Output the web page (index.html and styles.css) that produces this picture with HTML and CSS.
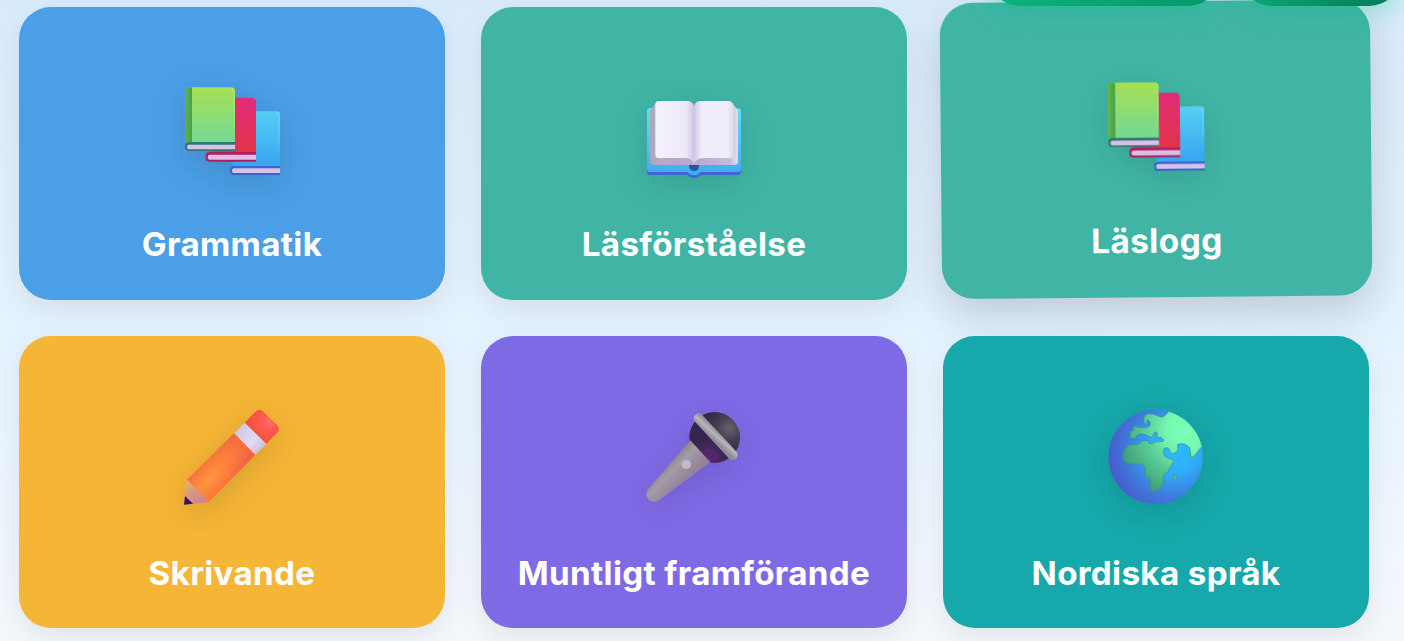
FILE: index.html
```html
<!DOCTYPE html>
<html lang="sv">
<head>
<meta charset="utf-8">
<title>Svenska</title>
<link rel="stylesheet" href="styles.css">
</head>
<body>
<svg class="defs" width="0" height="0" aria-hidden="true">
  <defs>
    <linearGradient id="green" x2="0" y2="1"><stop stop-color="#a7e052"/><stop offset="1" stop-color="#72d995"/></linearGradient>
    <linearGradient id="spine"><stop stop-color="#62b53d"/><stop offset="1" stop-color="#469e55"/></linearGradient>
    <linearGradient id="red" x2="0" y2="1"><stop stop-color="#e02c78"/><stop offset="1" stop-color="#e23349"/></linearGradient>
    <linearGradient id="blue" x2="0" y2="1"><stop stop-color="#54cff3"/><stop offset="1" stop-color="#39a3f0"/></linearGradient>
    <linearGradient id="cover" x2="0" y2="1"><stop stop-color="#60defd"/><stop offset="1" stop-color="#42a9f2"/></linearGradient>
    <linearGradient id="pageL"><stop stop-color="#f4f1fb"/><stop offset=".8" stop-color="#ece8f8"/><stop offset="1" stop-color="#cdc2e2"/></linearGradient>
    <linearGradient id="pageR"><stop stop-color="#cfc5e4"/><stop offset=".2" stop-color="#f0edfa"/><stop offset=".85" stop-color="#f0edfa"/><stop offset="1" stop-color="#e2dcef"/></linearGradient>
    <linearGradient id="block"><stop stop-color="#aaa8b8"/><stop offset=".1" stop-color="#b4aac9"/><stop offset=".5" stop-color="#b4a8d0"/><stop offset=".9" stop-color="#c3badd"/><stop offset="1" stop-color="#dcdae8"/></linearGradient>
    <linearGradient id="fore"><stop stop-color="#cfcbdd"/><stop offset="1" stop-color="#dedee8"/></linearGradient>
    <radialGradient id="wood" gradientUnits="userSpaceOnUse" cx="0" cy="0" r="1" gradientTransform="translate(132 254) rotate(-50) scale(190 66)"><stop stop-color="#ff9640"/><stop offset=".55" stop-color="#fb7b3b"/><stop offset="1" stop-color="#ee6445"/></radialGradient>
    <linearGradient id="tip" x1="70" y1="265" x2="115" y2="320" gradientUnits="userSpaceOnUse"><stop stop-color="#dfa978"/><stop offset="1" stop-color="#cf8093"/></linearGradient>
    <linearGradient id="band" x1="220" y1="100" x2="290" y2="165" gradientUnits="userSpaceOnUse"><stop stop-color="#cbc9dc"/><stop offset=".6" stop-color="#e3daf8"/><stop offset="1" stop-color="#cbbbdc"/></linearGradient>
    <radialGradient id="eraser" cx=".72" cy=".35" r=".6"><stop stop-color="#ff6e62"/><stop offset=".4" stop-color="#ff5a50"/><stop offset="1" stop-color="#f4503f"/></radialGradient>
    <radialGradient id="head" gradientUnits="userSpaceOnUse" cx="298" cy="100" r="100"><stop stop-color="#66606e"/><stop offset=".4" stop-color="#443d4e"/><stop offset=".75" stop-color="#33264b"/><stop offset="1" stop-color="#38254f"/></radialGradient>
    <radialGradient id="glow" gradientUnits="userSpaceOnUse" cx="236" cy="188" r="62"><stop stop-color="#572674"/><stop offset=".4" stop-color="#4e266a"/><stop offset="1" stop-color="#3a2652" stop-opacity="0"/></radialGradient>
    <linearGradient id="handle" x1="105" y1="200" x2="160" y2="255" gradientUnits="userSpaceOnUse"><stop stop-color="#817d83"/><stop offset=".45" stop-color="#a49da6"/><stop offset="1" stop-color="#93849b"/></linearGradient>
    <linearGradient id="ring" x1="268" y1="110" x2="248" y2="132" gradientUnits="userSpaceOnUse"><stop stop-color="#8f8b92"/><stop offset=".5" stop-color="#b9b5ba"/><stop offset="1" stop-color="#928c98"/></linearGradient>
    <radialGradient id="sea" gradientUnits="userSpaceOnUse" cx="255" cy="165" r="205"><stop stop-color="#2bbcff"/><stop offset=".35" stop-color="#30acf9"/><stop offset=".7" stop-color="#3f79dc"/><stop offset="1" stop-color="#4959cb"/></radialGradient>
    <radialGradient id="land" gradientUnits="userSpaceOnUse" cx="290" cy="105" r="200"><stop stop-color="#7affb4"/><stop offset=".3" stop-color="#76f8b0"/><stop offset=".65" stop-color="#57ca96"/><stop offset="1" stop-color="#43a079"/></radialGradient>
    <clipPath id="disc"><circle cx="197" cy="186" r="141.500"/></clipPath>
    <symbol id="books" viewBox="-9 -12 390 390">
      <path fill="url(#blue)" d="M188 124H321Q330 124 330 134V292H188Z"/>
      <path fill="#87ddf8" opacity=".4" d="M318 128Q329 124 329 136V200L325 240V140Z"/>
      <path fill="#3a66cc" d="M192 288H330V315H189Q180 315 180 304V299Q180 288 192 288Z"/>
      <path fill="#d5c3eb" d="M190 295H330V309H190Q186 307 186 302T190 295Z"/>
      <path fill="url(#red)" d="M118 83H247Q258 84 258 96V250H118Z"/>
      <path fill="#ae1f5c" d="M118 246H258V275H116Q107 274 107 264V257Q107 246 118 246Z"/>
      <path fill="#dcbde7" d="M118 254H258V269H118Q113 267 113 261T118 254Z"/>
      <path fill="url(#green)" d="M54 52H184Q195 53 195 64V220H45V63Q45 52 54 52Z"/>
      <path fill="url(#spine)" d="M54 52H66V218H45V63Q45 52 54 52Z"/>
      <path fill="#c3ee72" opacity=".55" d="M184 53Q194 54 194 66V150L191 200V66Z"/>
      <path fill="#32776c" d="M56 216H195V243H54Q45 242 45 232V226Q45 216 56 216Z"/>
      <path fill="#d7c1ec" d="M55 224H195V238H55Q51 236 51 231T55 224Z"/>
    </symbol>
  </defs>
</svg>

<div class="toolbar"><span class="pill pill-wide"></span><span class="pill pill-small"></span></div>

<main class="grid">
  <a class="card blue">
    <svg class="icon"><use href="#books"/></svg>
    <span class="label">Grammatik</span>
  </a>
  <a class="card green">
    <svg class="icon" viewBox="-3 -42 390 390">
      <path fill="#3f67cd" d="M51 100H333V276Q333 285 323 285H211Q205 294 192 294T173 285H61Q51 285 51 275Z"/>
      <path fill="url(#cover)" d="M61 84H323Q333 84 333 94V266Q333 276 323 276H211Q205 286 192 286T173 276H61Q51 276 51 266V94Q51 84 61 84Z"/>
      <path fill="#2456a8" d="M177 252H207V261Q204 273 192 273T177 261Z"/>
      <path fill="url(#block)" d="M80 65L62 90Q60 94 60 100V244Q60 255 71 255H313Q324 255 324 244V98Q324 91 320 87L303 65L192 78Z"/>
      <path fill="url(#fore)" d="M302 64L320 87Q324 92 324 98V242Q324 250 318 252L302 234Z"/>
      <path fill="url(#pageL)" d="M87 63H175Q188 64 192 78V252Q184 234 168 234H87Q76 234 76 224V74Q76 63 87 63Z"/>
      <path fill="url(#pageR)" d="M209 63H298Q304 63 309 71V224Q309 234 298 234H218Q200 234 192 252V78Q196 64 209 63Z"/>
    </svg>
    <span class="label">Läsförståelse</span>
  </a>
  <a class="card green raised">
    <svg class="icon"><use href="#books"/></svg>
    <span class="label">Läslogg</span>
  </a>
  <a class="card yellow">
    <svg class="icon" viewBox="6 0 390 390">
      <path fill="url(#eraser)" d="M239 83L271 50Q281 41 292 47L336 90Q346 100 339 110L304 147Z"/>
      <path fill="url(#band)" d="M239 83L304 147L271 180L207 115Z"/>
      <path fill="url(#wood)" d="M207 115L271 180L131 321L66 254Z"/>
      <path fill="url(#tip)" d="M66 254L131 321L57 329L59 300Z"/>
      <path fill="#3d1455" d="M60 303L84 326L57 329Z"/>
    </svg>
    <span class="label">Skrivande</span>
  </a>
  <a class="card purple">
    <svg class="icon" viewBox="-3 0 390 390">
      <circle cx="254" cy="127" r="76" fill="url(#head)"/>
      <circle cx="254" cy="127" r="76" fill="url(#glow)"/>
      <path fill="url(#handle)" d="M181 136L241 201L87 316Q70 326 57 314Q43 300 54 283Z"/>
      <path stroke="url(#ring)" stroke-width="30" stroke-linecap="round" d="M206 70L308 180"/>
      <circle cx="169" cy="208" r="14" fill="#c1bac7"/>
    </svg>
    <span class="label">Muntligt framförande</span>
  </a>
  <a class="card teal">
    <svg class="icon" viewBox="3 0 390 390">
      <circle cx="197" cy="186" r="141.500" fill="url(#sea)"/>
      <g clip-path="url(#disc)" fill="url(#land)" stroke="#37977a" stroke-width="2" stroke-linejoin="round">
        <path d="M162 84V70Q163 57 178 56Q190 56 202 62Q217 69 223 63L238 48L350 30V158H332L314 182Q307 190 302 184Q301 177 301 168Q300 155 289 150Q277 143 263 148Q260 155 264 161Q263 171 252 175Q244 178 240 171Q239 161 232 158L222 160Q219 171 222 180Q229 190 243 192Q252 194 249 203L232 232Q221 236 221 241V264L207 282Q199 290 188 287L180 282V250Q168 249 165 240V217Q160 208 151 207H117Q104 203 100 191Q97 178 103 166Q109 151 125 149L147 148Q151 139 160 138H174Q175 147 184 147Q197 138 208 140L220 139V133L213 127L205 128L201 121L202 114L196 110L190 116L189 125Q183 129 176 124Q166 117 154 117Q139 116 138 129Q129 133 121 129V112L130 104V97L135 93L148 98L173 97Q181 94 181 86Q179 75 171 75L171 83Q166 88 162 84Z"/>
        <path d="M250 240L258 238V253L251 257Z"/>
      </g>
    </svg>
    <span class="label">Nordiska språk</span>
  </a>
</main>
</body>
</html>
```
FILE: styles.css
```css
* {
  box-sizing: border-box;
}

body {
  margin: 0;
  height: 641px;
  overflow: hidden;
  position: relative;
  background: linear-gradient(180deg, #d9ebfb 0%, #e5f3fe 54%, #f4f8fc 100%);
  font-family: Inter, "Liberation Sans", sans-serif;
}

.defs {
  position: absolute;
}

.grid {
  display: grid;
  grid-template-columns: repeat(3, 426px);
  grid-auto-rows: 292.600px;
  gap: 36px;
  padding: 7px 0 0 19px;
}

.card {
  position: relative;
  display: flex;
  flex-direction: column;
  align-items: center;
  padding-top: 59.200px;
  border-radius: 32px;
  box-shadow: 0 10px 30px rgba(0, 0, 0, 0.08);
  color: #fff;
}

.raised {
  transform: translateY(-4.300px) rotate(-0.5deg) scale(1.01);
  box-shadow: 0 16px 40px rgba(15, 23, 42, 0.18);
}

.blue { background: #4a9fe7; }
.green { background: #40b5a6; }
.yellow { background: #f5b536; }
.purple { background: #7f6ae6; }
.teal { background: #16a8aa; }

.icon {
  display: block;
  width: 130px;
  height: 130px;
  overflow: visible;
  fill: none;
  filter: drop-shadow(0 8px 16px rgba(0, 0, 0, 0.12));
}

.label {
  margin-top: 27px;
  font-size: 33.200px;
  letter-spacing: 0.33px;
  line-height: 42px;
  font-weight: 700;
  white-space: nowrap;
}

/* Floating actions scrolled to the top edge, above the cards */
.toolbar {
  position: absolute;
  z-index: 2;
  top: -58px;
  left: 988px;
  display: flex;
  gap: 20px;
}

.pill {
  height: 64px;
  border-radius: 32px;
  box-shadow: 0 8px 24px rgba(16, 185, 129, 0.3);
}

.pill-wide {
  width: 232px;
  background: linear-gradient(135deg, #10b981, #059669);
}

.pill-small {
  width: 161px;
  background: linear-gradient(135deg, #10b981, #047857);
}
```
